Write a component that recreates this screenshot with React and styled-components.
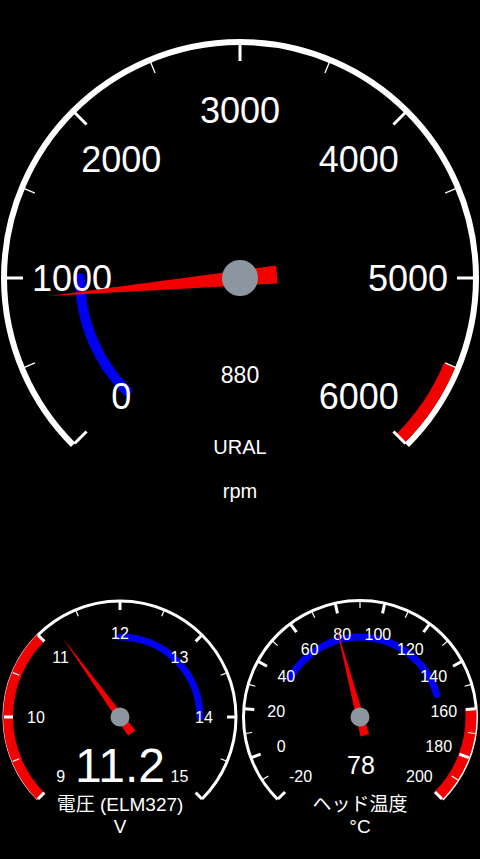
import React from 'react';
import styled, { createGlobalStyle } from 'styled-components';

const FONT = '"Liberation Sans", "Noto Sans CJK JP", Arial, sans-serif';

const GlobalStyle = createGlobalStyle`
  html, body {
    margin: 0;
    padding: 0;
    background: #000;
  }
  body {
    font-family: ${FONT};
  }
`;

const Screen = styled.div`
  width: 480px;
  height: 859px;
  background: #000;
  display: flex;
  flex-direction: column;
  overflow: hidden;
`;

const MainDial = styled.svg`
  display: block;
  width: 480px;
  height: 520px;
  flex: none;
`;

const BottomRow = styled.div`
  display: flex;
  margin-top: 70px;
`;

const SmallDial = styled.svg`
  display: block;
  width: 240px;
  height: 269px;
  flex: none;
`;

// scale numbers around the dial, centred on their point
const ScaleText = styled.text`
  fill: #fff;
  font-family: ${FONT};
  font-size: ${props => props.$size}px;
  text-anchor: middle;
  dominant-baseline: central;
`;

// readout, title and unit under the hub, sat on a baseline
const Caption = styled.text`
  fill: #fff;
  font-family: ${FONT};
  font-size: ${props => props.$size}px;
  text-anchor: middle;
`;

const RED = '#f20000';
const BLUE = '#0000f2';
const HUB = '#8c96a1';

const polar = (cx, cy, r, deg) => {
  const a = (deg * Math.PI) / 180;
  return [cx + r * Math.cos(a), cy - r * Math.sin(a)];
};

const arcPath = (cx, cy, r, a0, a1) => {
  const [x0, y0] = polar(cx, cy, r, a0);
  const [x1, y1] = polar(cx, cy, r, a1);
  const large = a0 - a1 > 180 ? 1 : 0;
  return `M ${x0} ${y0} A ${r} ${r} 0 ${large} 1 ${x1} ${y1}`;
};

const steps = (min, max, step) => {
  const out = [];
  for (let v = min; v <= max + 1e-6; v += step) out.push(Math.round(v * 100) / 100);
  return out;
};

function Dial({ spec }) {
  const { cx, cy, r, arcWidth, min, max } = spec;
  const toAngle = v => 225 - ((v - min) / (max - min)) * 270;

  const tick = (v, t, key) => {
    const a = toAngle(v);
    const [x0, y0] = polar(cx, cy, t.from, a);
    const [x1, y1] = polar(cx, cy, t.to, a);
    return <line key={key} x1={x0} y1={y0} x2={x1} y2={y1} stroke="#fff" strokeWidth={t.width} />;
  };

  const needleAngle = toAngle(spec.needle.value);
  const { length, tail, half } = spec.needle;

  return (
    <g>
      <path d={arcPath(cx, cy, r, 225, -45)} fill="none" stroke="#fff" strokeWidth={arcWidth} />
      {spec.bands.map((b, i) => (
        <path
          key={i}
          d={arcPath(cx, cy, b.r, toAngle(b.from), toAngle(b.to))}
          fill="none"
          stroke={b.color}
          strokeWidth={b.width}
          strokeLinecap={b.round ? 'round' : 'butt'}
        />
      ))}
      {steps(min, max, spec.minor.step).map((v, i) => tick(v, spec.minor, 'm' + i))}
      {steps(min, max, spec.major.step).map((v, i) => tick(v, spec.major, 'M' + i))}
      {steps(min, max, spec.labels.step).map(v => {
        const [x, y] = polar(cx, cy, spec.labels.r, toAngle(v));
        return (
          <ScaleText key={v} x={x} y={y} $size={spec.labels.size}>
            {v}
          </ScaleText>
        );
      })}
      <polygon
        points={`${length},0 ${-tail},${-half} ${-tail},${half}`}
        fill={RED}
        transform={`translate(${cx} ${cy}) rotate(${-needleAngle})`}
      />
      <circle cx={cx} cy={cy} r={spec.hub} fill={HUB} />
    </g>
  );
}

const rpmSpec = {
  cx: 240, cy: 278, r: 236, arcWidth: 6, min: 0, max: 6000,
  major: { step: 1000, from: 234, to: 217, width: 3 },
  minor: { step: 500, from: 234, to: 222, width: 1.3 },
  labels: { step: 1000, r: 168, size: 36 },
  bands: [
    { from: 0, to: 1000, r: 160, width: 10, color: BLUE, round: true },
    { from: 5500, to: 6000, r: 227, width: 12, color: RED },
  ],
  needle: { value: 880, length: 192, tail: 37, half: 9 },
  hub: 18,
};

const voltSpec = {
  cx: 120, cy: 127, r: 116, arcWidth: 3, min: 9, max: 15,
  major: { step: 1, from: 116, to: 107, width: 3 },
  minor: { step: 0.5, from: 116, to: 109, width: 1.2 },
  labels: { step: 1, r: 84, size: 16 },
  bands: [
    { from: 9, to: 11, r: 112, width: 10, color: RED },
    { from: 12, to: 14, r: 80, width: 7, color: BLUE, round: true },
  ],
  needle: { value: 11.2, length: 97, tail: 20, half: 4.5 },
  hub: 9.5,
};

const headSpec = {
  cx: 120, cy: 127, r: 116.5, arcWidth: 3, min: -20, max: 200,
  major: { step: 20, from: 116, to: 106, width: 3 },
  minor: { step: 10, from: 116, to: 109, width: 1.2 },
  labels: { step: 20, r: 84, size: 16 },
  bands: [
    { from: 40, to: 150, r: 80, width: 7, color: BLUE, round: true },
    { from: 160, to: 200, r: 111, width: 11, color: RED },
  ],
  needle: { value: 78, length: 95, tail: 19, half: 4.5 },
  hub: 9.5,
};

export default function App() {
  return (
    <Screen>
      <GlobalStyle />
      <MainDial viewBox="0 0 480 520">
        <Dial spec={rpmSpec} />
        <Caption x={240} y={383} $size={23}>880</Caption>
        <Caption x={240} y={454} $size={20}>URAL</Caption>
        <Caption x={240} y={498} $size={20}>rpm</Caption>
      </MainDial>

      <BottomRow>
        <SmallDial viewBox="0 0 240 269">
          <Dial spec={voltSpec} />
          <Caption x={120} y={192} $size={48}>11.2</Caption>
          <Caption x={120} y={221} $size={19}>電圧 (ELM327)</Caption>
          <Caption x={120} y={243} $size={19}>V</Caption>
        </SmallDial>
        <SmallDial viewBox="0 0 240 269">
          <Dial spec={headSpec} />
          <Caption x={121} y={184} $size={25}>78</Caption>
          <Caption x={120} y={221} $size={19}>ヘッド温度</Caption>
          <Caption x={120} y={243} $size={19}>°C</Caption>
        </SmallDial>
      </BottomRow>
    </Screen>
  );
}
